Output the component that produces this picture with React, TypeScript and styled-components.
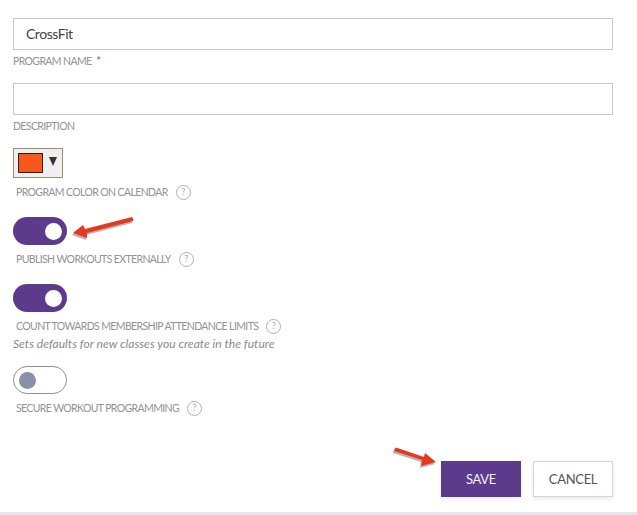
import React from "react";
import styled, { createGlobalStyle } from "styled-components";

const GlobalStyle = createGlobalStyle`
  html, body { margin: 0; padding: 0; background: #fff; }
  body { font-family: "Lato", "Open Sans", sans-serif; }
`;

const Page = styled.div`
  position: relative;
  width: 637px;
  height: 515px;
  box-sizing: border-box;
  padding: 18px 24px 0 13px;
  border-bottom: 3px solid #e6e7ed;
  overflow: hidden;
`;

const Field = styled.div<{ $gap: number }>`
  display: flex;
  flex-direction: column;
  margin-bottom: ${(p) => p.$gap}px;
`;

const TextInput = styled.div`
  box-sizing: border-box;
  width: 600px;
  height: 32px;
  border: 1px solid #c8c8c8;
  padding: 0 12px;
  font-size: 14px;
  letter-spacing: -0.45px;
  line-height: 30px;
  color: #444;
`;

const FieldLabel = styled.div<{ $indent?: boolean }>`
  display: flex;
  align-items: center;
  height: 14px;
  margin-top: ${(p) => (p.$indent ? "7px" : "4px")};
  padding-left: ${(p) => (p.$indent ? "3px" : "0")};
  font-size: 10.5px;
  letter-spacing: -0.62px;
  line-height: 14px;
  color: #939393;
  white-space: nowrap;
`;

const Required = styled.span`
  color: #d9342b;
  margin-left: 5px;
`;

const Help = styled.span`
  box-sizing: border-box;
  display: inline-flex;
  align-items: center;
  justify-content: center;
  width: 15px;
  height: 15px;
  margin-left: 8px;
  border: 1px solid #b0b0b0;
  border-radius: 50%;
  font-size: 9px;
  letter-spacing: 0;
  color: #a8a8a8;
`;

const ColorButton = styled.div`
  box-sizing: border-box;
  display: flex;
  align-items: flex-start;
  width: 50px;
  height: 30px;
  padding: 4px;
  background: #efefef;
  border: 1px solid #a58a70;
`;

const Swatch = styled.div`
  box-sizing: border-box;
  width: 25px;
  height: 20px;
  background: #f9581c;
  border: 1px solid #222;
`;

const Caret = styled.div`
  width: 0;
  height: 0;
  margin: 4px 0 0 6px;
  border-left: 4px solid transparent;
  border-right: 4px solid transparent;
  border-top: 9px solid #333;
`;

const Toggle = styled.div<{ $on?: boolean }>`
  box-sizing: border-box;
  display: flex;
  align-items: center;
  justify-content: ${(p) => (p.$on ? "flex-end" : "flex-start")};
  width: 54px;
  height: 28px;
  padding: 0 5px;
  border-radius: 14px;
  background: ${(p) => (p.$on ? "#5c3a8c" : "#fff")};
  border: ${(p) => (p.$on ? "none" : "1px solid #8a90aa")};
`;

const Knob = styled.div<{ $on?: boolean }>`
  width: 17px;
  height: 17px;
  border-radius: 50%;
  background: ${(p) => (p.$on ? "#fff" : "#8a90aa")};
`;

const Hint = styled.div`
  margin-top: 4px;
  font-size: 12.1px;
  line-height: 14px;
  font-style: italic;
  color: #8a8a8a;
`;

const Actions = styled.div`
  display: flex;
  justify-content: flex-end;
  gap: 12px;
  width: 600px;
  margin-top: 46px;
`;

const Button = styled.div<{ $primary?: boolean }>`
  box-sizing: border-box;
  display: flex;
  align-items: center;
  justify-content: center;
  width: 80px;
  height: 36px;
  font-size: 13px;
  letter-spacing: -0.3px;
  background: ${(p) => (p.$primary ? "#5c3a8c" : "#fff")};
  color: ${(p) => (p.$primary ? "#f2eff7" : "#555")};
  border: ${(p) => (p.$primary ? "none" : "1px solid #d4d4d4")};
  box-shadow: 0 2px 5px rgba(0, 0, 0, 0.08);
`;

const ArrowLayer = styled.svg`
  position: absolute;
  left: 0;
  top: 0;
  pointer-events: none;
`;

// page coordinates, traced from the tip round to the tail
const arrows = [
  "M73 233 L83 225 L85 229 L132 217 Q134 219 133 221 L87 233 L87 238 Z",
  "M436 462 L425 453 L424 457 L396 447.5 Q394 449 394 451 L422 460 L421 466 Z",
];

export default function App() {
  return (
    <Page>
      <GlobalStyle />
      <Field $gap={15}>
        <TextInput>CrossFit</TextInput>
        <FieldLabel>
          PROGRAM NAME<Required>*</Required>
        </FieldLabel>
      </Field>
      <Field $gap={15}>
        <TextInput />
        <FieldLabel>DESCRIPTION</FieldLabel>
      </Field>
      <Field $gap={18}>
        <ColorButton>
          <Swatch />
          <Caret />
        </ColorButton>
        <FieldLabel $indent>
          PROGRAM COLOR ON CALENDAR<Help>?</Help>
        </FieldLabel>
      </Field>
      <Field $gap={18}>
        <Toggle $on>
          <Knob $on />
        </Toggle>
        <FieldLabel $indent>
          PUBLISH WORKOUTS EXTERNALLY<Help>?</Help>
        </FieldLabel>
      </Field>
      <Field $gap={15}>
        <Toggle $on>
          <Knob $on />
        </Toggle>
        <FieldLabel $indent>
          COUNT TOWARDS MEMBERSHIP ATTENDANCE LIMITS<Help>?</Help>
        </FieldLabel>
        <Hint>Sets defaults for new classes you create in the future</Hint>
      </Field>
      <Field $gap={0}>
        <Toggle>
          <Knob />
        </Toggle>
        <FieldLabel $indent>
          SECURE WORKOUT PROGRAMMING<Help>?</Help>
        </FieldLabel>
      </Field>
      <Actions>
        <Button $primary>SAVE</Button>
        <Button>CANCEL</Button>
      </Actions>
      <ArrowLayer width="637" height="515" viewBox="0 0 637 515">
        {arrows.map((d) => (
          <g key={d}>
            <path d={d} fill="#444" opacity="0.4" transform="translate(-1 2)" />
            <path d={d} fill="#e5391f" />
          </g>
        ))}
      </ArrowLayer>
    </Page>
  );
}
